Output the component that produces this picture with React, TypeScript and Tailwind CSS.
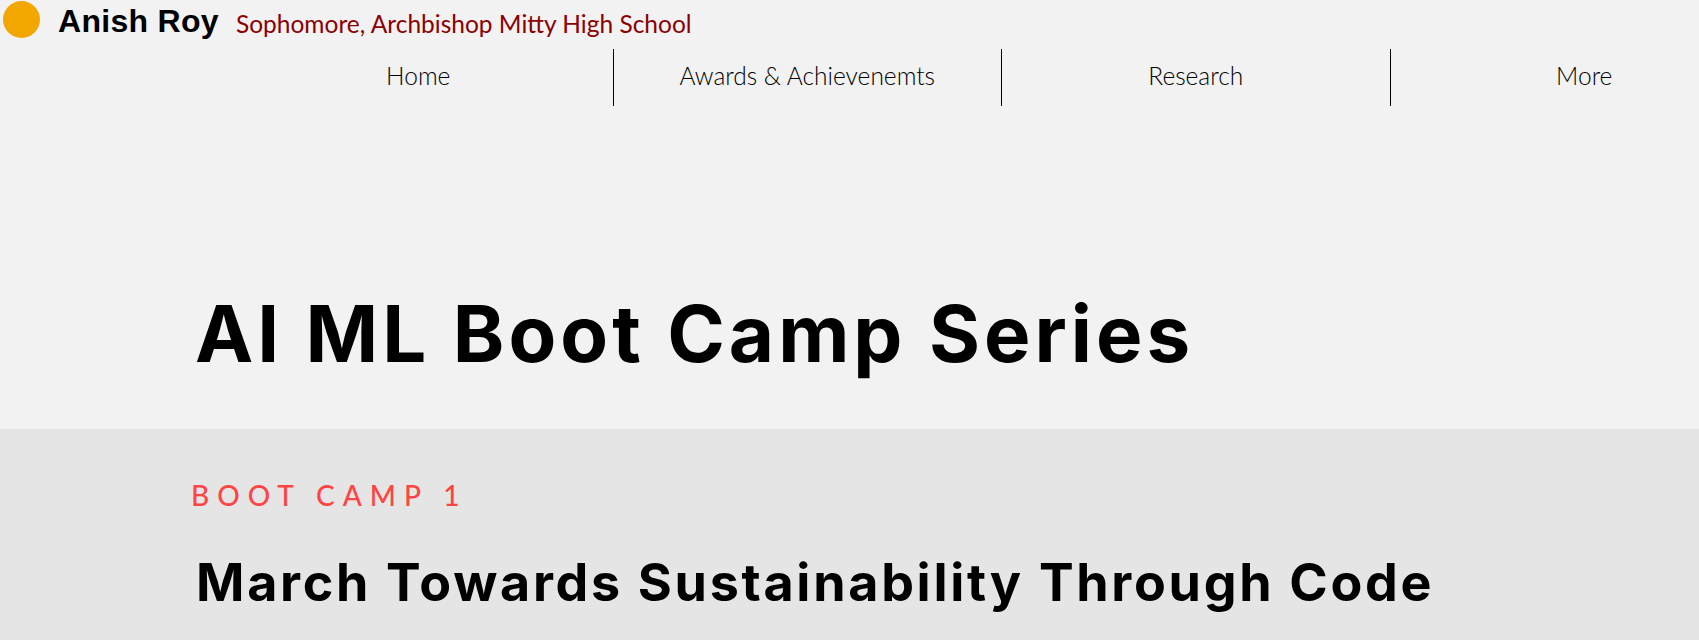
const navItems = ["Home", "Awards & Achievenemts", "Research", "More"];

const App = () => {
  return (
    <div className="w-full h-[640px] overflow-hidden bg-[#f2f2f2]">
      {/* site header */}
      <header className="flex items-start pl-[3px] pt-[1px]">
        <div className="w-[37px] h-[37px] shrink-0 rounded-full bg-[#f1a600]" />
        <span className="ml-[18px] mt-[1px] text-[32px] leading-[38px] font-bold tracking-[0.3px] text-black font-['Liberation_Sans',Arial,sans-serif]">
          Anish Roy
        </span>
        <span className="ml-[17px] mt-[7px] text-[24.5px] leading-[32px] text-[#8b0000] font-['Lato','Open_Sans',sans-serif]">
          Sophomore, Archbishop Mitty High School
        </span>
      </header>

      <nav className="flex mt-[9px] ml-[224px] w-[1560px] h-[57px]">
        {navItems.map((item, index) => (
          <div
            key={item}
            className={`w-[388.5px] shrink-0 flex items-center justify-center pb-[2px] ${
              index > 0 ? "border-l border-black" : ""
            }`}
          >
            <span className="text-[24.5px] font-light text-black font-['Lato','Open_Sans',sans-serif]">
              {item}
            </span>
          </div>
        ))}
      </nav>

      {/* hero title */}
      <section className="h-[323px] pt-[189px] pl-[195px]">
        <h1 className="text-[78px] leading-none font-bold tracking-[4px] text-black font-['Inter',sans-serif]">
          AI ML Boot Camp Series
        </h1>
      </section>

      {/* boot camp block */}
      <section className="bg-[#e5e5e5] h-[212px] pt-[52px] pl-[191px]">
        <p className="text-[28px] leading-none font-medium tracking-[8px] text-[#ff4444] font-['Lato','Open_Sans',sans-serif]">
          BOOT CAMP 1
        </p>
        <h2 className="mt-[48px] ml-[5px] text-[52px] leading-none font-bold tracking-[2.7px] text-black font-['Inter',sans-serif]">
          March Towards Sustainability Through Code
        </h2>
      </section>
    </div>
  );
};

export default App;
